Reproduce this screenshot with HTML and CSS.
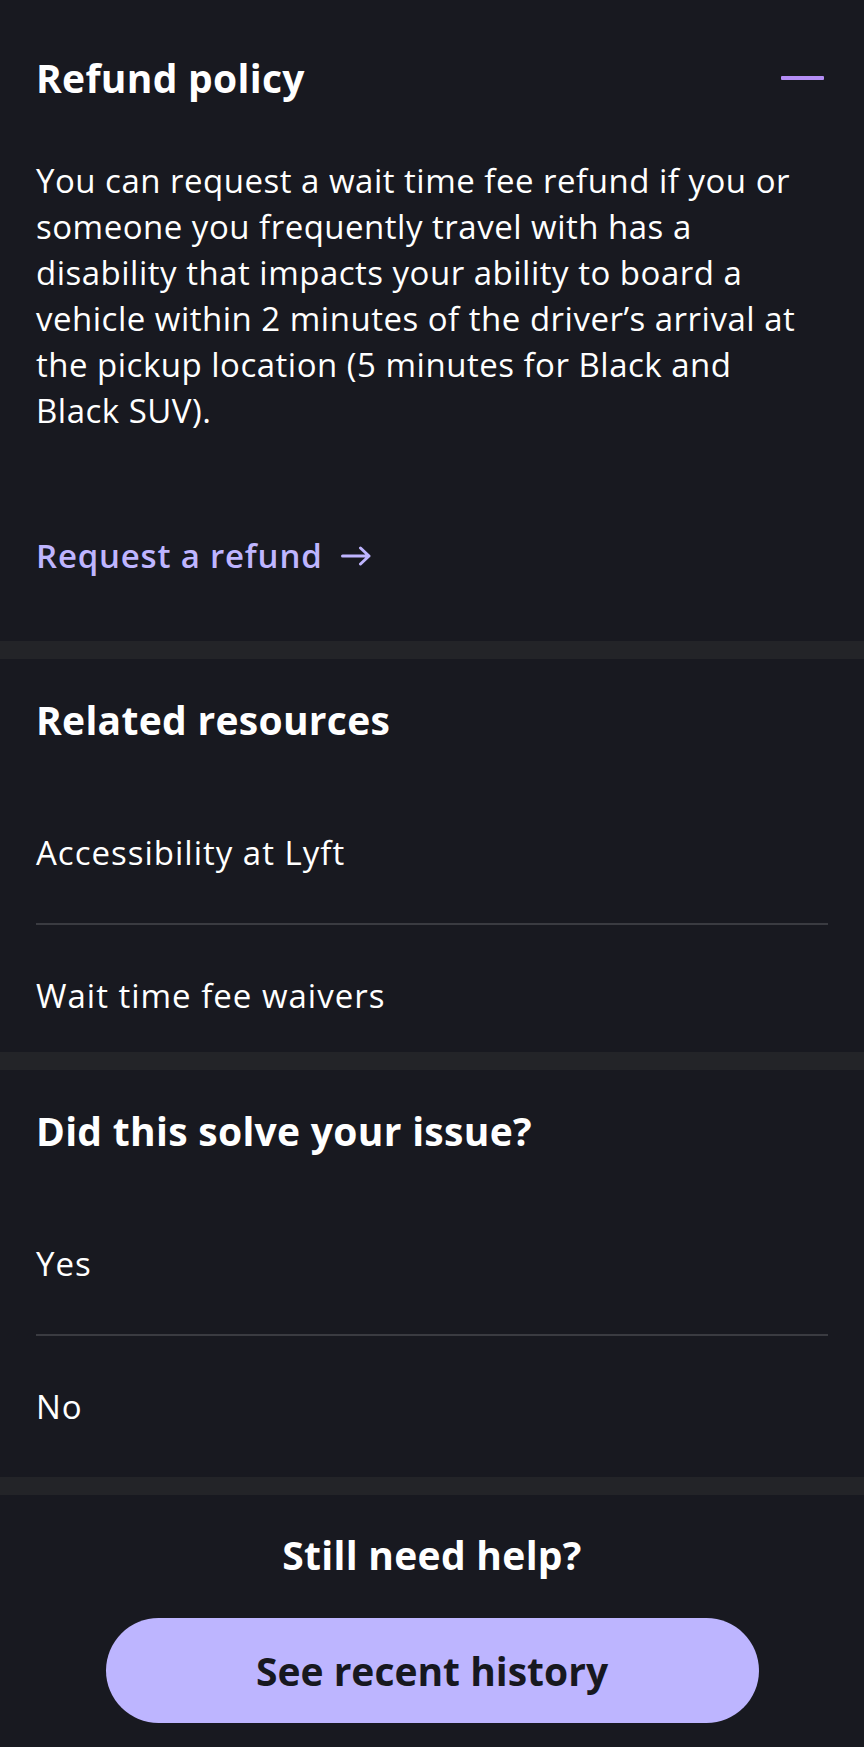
FILE: index.html
```html
<!DOCTYPE html>
<html lang="en">
<head>
<meta charset="utf-8">
<title>Refund policy</title>
<link rel="stylesheet" href="styles.css">
</head>
<body>
<main class="page">
  <section class="panel refund">
    <div class="panel-head">
      <h2 class="heading">Refund policy</h2>
      <span class="collapse-icon" aria-hidden="true"></span>
    </div>
    <p class="body-text">You can request a wait time fee refund if you or someone you frequently travel with has a disability that impacts your ability to board a vehicle within 2 minutes of the driver’s arrival at the pickup location (5 minutes for Black and Black SUV).</p>
    <a class="refund-link" href="#">Request a refund
      <svg class="arrow" width="30" height="20" viewBox="0 0 30 20" aria-hidden="true"><path d="M1.5 10H28M19.5 2L28 10L19.5 18" fill="none" stroke="currentColor" stroke-width="3" stroke-linecap="round" stroke-linejoin="round"/></svg>
    </a>
  </section>

  <section class="panel related">
    <h2 class="heading">Related resources</h2>
    <ul class="list">
      <li class="list-item">Accessibility at Lyft</li>
      <li class="list-item">Wait time fee waivers</li>
    </ul>
  </section>

  <section class="panel feedback">
    <h2 class="heading">Did this solve your issue?</h2>
    <ul class="list">
      <li class="list-item">Yes</li>
      <li class="list-item">No</li>
    </ul>
  </section>

  <section class="panel help">
    <h2 class="heading">Still need help?</h2>
    <button class="history-btn" type="button">See recent history</button>
  </section>
</main>
</body>
</html>
```

FILE: styles.css
```css
* { box-sizing: border-box; }

html, body {
  margin: 0;
  padding: 0;
  background: #181920;
}

body {
  font-family: "Open Sans", "Liberation Sans", sans-serif;
  color: #ffffff;
  width: 864px;
}

.page {
  display: flex;
  flex-direction: column;
  gap: 18px;
  background: #232428;
  min-height: 1747px;
}

.panel {
  background: #181920;
  padding: 0 36px;
}

.panel:last-child { flex: 1; }

.heading {
  margin: 0;
  font-size: 39px;
  line-height: 48px;
  font-weight: 700;
  letter-spacing: 0.3px;
}

.refund {
  padding-top: 54px;
  padding-bottom: 62px;
}

.panel-head {
  display: flex;
  align-items: center;
  justify-content: space-between;
}

.collapse-icon {
  width: 43px;
  height: 4px;
  border-radius: 1px;
  background: #b48df5;
  margin-right: 4px;
}

.body-text {
  margin: 56px 0 0;
  max-width: 775px;
  font-size: 33px;
  line-height: 46px;
  font-weight: 400;
  letter-spacing: 0.5px;
}

.refund-link {
  display: inline-flex;
  align-items: center;
  gap: 19px;
  margin-top: 99px;
  font-size: 33px;
  line-height: 46px;
  font-weight: 600;
  letter-spacing: 0.8px;
  color: #bfb5ff;
  text-decoration: none;
}

.arrow { display: block; }

.related, .feedback {
  padding-top: 37px;
}

.related { padding-bottom: 33px; }
.feedback { padding-bottom: 47px; }

.list {
  list-style: none;
  margin: 38px 0 0;
  padding: 0;
}

.list-item {
  font-size: 33px;
  line-height: 46px;
  letter-spacing: 1px;
  padding: 48px 0 47px;
  border-bottom: 2px solid #3a3b41;
}

.list-item:last-child {
  border-bottom: 0;
  padding-bottom: 0;
}

.help {
  display: flex;
  flex-direction: column;
  align-items: center;
  padding-top: 36px;
  padding-bottom: 23px;
}

.history-btn {
  margin-top: 39px;
  width: 653px;
  height: 105px;
  border: 0;
  border-radius: 53px;
  background: #bdb5ff;
  color: #17181f;
  font-family: "Open Sans", "Liberation Sans", sans-serif;
  font-size: 39px;
  font-weight: 700;
  cursor: pointer;
}
```
